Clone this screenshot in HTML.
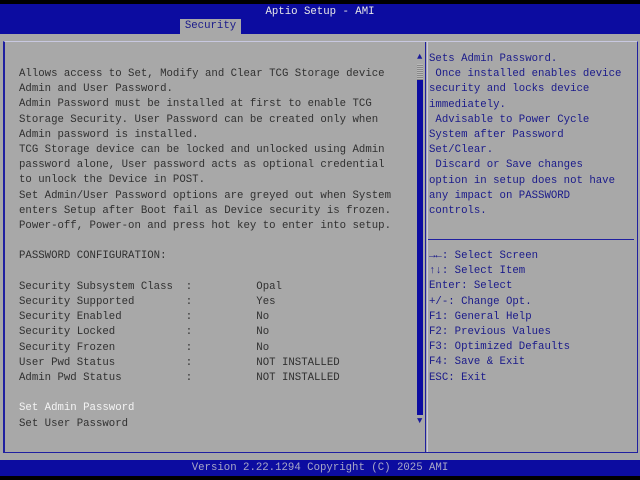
<!DOCTYPE html>
<html><head><style>
*{margin:0;padding:0}
body{width:640px;height:480px;background:#000;position:relative;overflow:hidden;font-family:"Liberation Mono","DejaVu Sans Mono",monospace;font-size:10.7px}
.a{position:absolute}
.t{white-space:pre;line-height:15.2px}
</style></head><body>
<div class="a" style="left:0;top:4px;width:640px;height:30px;background:#0c0ca0"></div>
<div class="a t" style="left:0;top:4px;width:640px;text-align:center;color:#e8e8e8;line-height:16px">Aptio Setup - AMI</div>
<div class="a t" style="left:180px;top:19px;width:61px;height:15px;background:#a8a8a8;color:#1a1a8a;text-align:center;line-height:15px">Security</div>
<div class="a" style="left:0;top:34px;width:640px;height:426px;background:#a8a8a8"></div>
<div class="a" style="left:3px;top:41px;width:632px;height:410px;border:1px solid #2020a0;border-top-color:#c8c8e0;border-left-width:2px"></div>
<div class="a" style="left:425px;top:42px;width:1px;height:410px;background:#2020a0"></div>
<div class="a" style="left:427px;top:42px;width:1px;height:410px;background:#c8c8e0"></div>
<div class="a" style="left:428px;top:239px;width:206px;height:1px;background:#2020a0"></div>
<div class="a" style="left:417px;top:52px;color:#1a1a9a;font-size:9px">▲</div>
<div class="a" style="left:417px;top:64px;width:6px;height:16px;background:repeating-linear-gradient(0deg,#888 0 1px,#b8b8b8 1px 2px)"></div>
<div class="a" style="left:417px;top:80px;width:6px;height:335px;background:#0c0ca0"></div>
<div class="a" style="left:417px;top:416px;color:#1a1a9a;font-size:9px">▼</div>
<div class="a t" style="left:19px;top:67px;color:#303030">Allows access to Set, Modify and Clear TCG Storage device
Admin and User Password.
Admin Password must be installed at first to enable TCG
Storage Security. User Password can be created only when
Admin password is installed.
TCG Storage device can be locked and unlocked using Admin
password alone, User password acts as optional credential
to unlock the Device in POST.
Set Admin/User Password options are greyed out when System
enters Setup after Boot fail as Device security is frozen.
Power-off, Power-on and press hot key to enter into setup.

PASSWORD CONFIGURATION:

Security Subsystem Class  :          Opal
Security Supported        :          Yes
Security Enabled          :          No
Security Locked           :          No
Security Frozen           :          No
User Pwd Status           :          NOT INSTALLED
Admin Pwd Status          :          NOT INSTALLED

<span style="color:#f4f4f4">Set Admin Password</span>
Set User Password</div>
<div class="a t" style="left:429px;top:52px;color:#1a1a8a">Sets Admin Password.
 Once installed enables device
security and locks device
immediately.
 Advisable to Power Cycle
System after Password
Set/Clear.
 Discard or Save changes
option in setup does not have
any impact on PASSWORD
controls.</div>
<div class="a t" style="left:429px;top:249px;color:#1a1a8a">→←: Select Screen
↑↓: Select Item
Enter: Select
+/-: Change Opt.
F1: General Help
F2: Previous Values
F3: Optimized Defaults
F4: Save &amp; Exit
ESC: Exit</div>
<div class="a" style="left:0;top:460px;width:640px;height:16px;background:#0c0ca0"></div>
<div class="a t" style="left:0;top:460px;width:640px;text-align:center;color:#a8a8c8;line-height:16px">Version 2.22.1294 Copyright (C) 2025 AMI</div>
</body></html>
